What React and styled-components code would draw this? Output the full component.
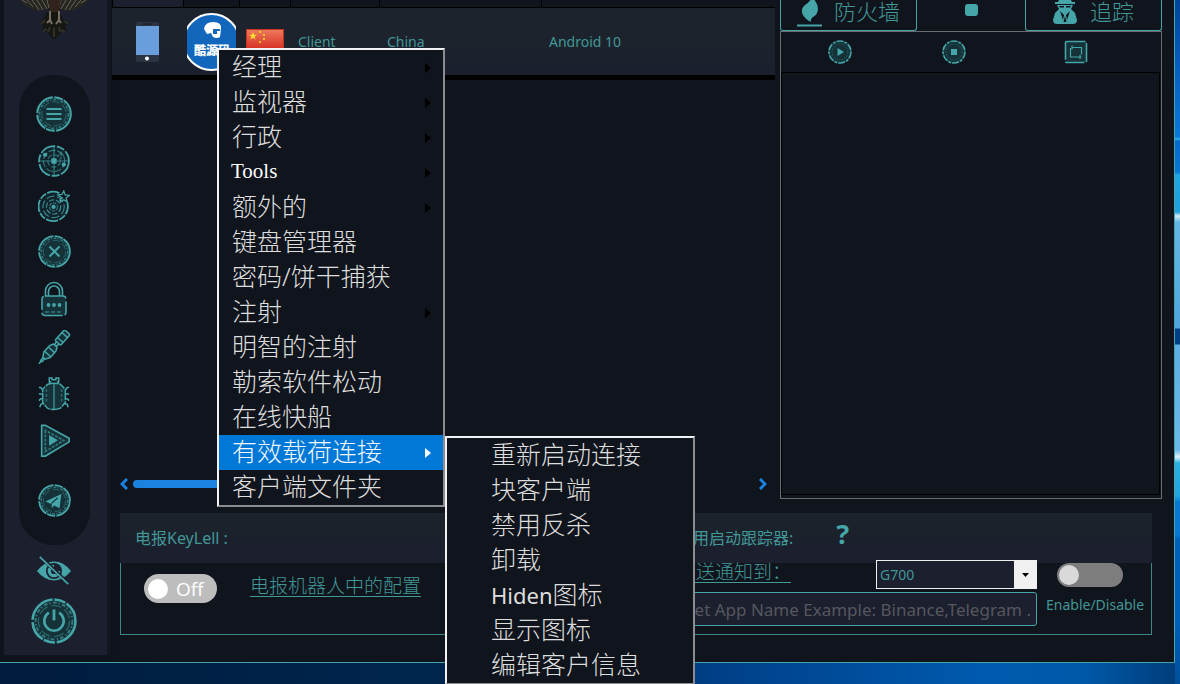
import React from "react";
import styled, { createGlobalStyle, css } from "styled-components";

const teal = "#45a5a8";
const tealText = "#429797";
const sans = `"Noto Sans", "Noto Sans CJK SC", sans-serif`;

const GlobalStyle = createGlobalStyle`
  *, *::before, *::after { box-sizing: border-box; }
  body {
    margin: 0;
    min-height: 100vh;
    font-family: ${sans};
    background:
      linear-gradient(180deg, #00459a 0, #0a62c4 78px, #0a78d8 137px, #2ab4e8 139px, #0868cc 141px, #0878d4 172px,
        #1ea6e0 175px, #1ea0dc 212px, #d8eef8 216px, #62b6e4 222px, #4fa6de 328px, #003f86 329px, #003f86 344px,
        #5caee4 345px, #6cb8e8 450px, #e0f2fa 457px, #28b0e2 463px, #20a8de 496px, #0878d2 502px, #0878d2 535px,
        #0060b8 539px, #0060b8 620px, #004f9c 100%) right top / 5px 100% no-repeat,
      linear-gradient(90deg, #001c3e 0, #00264f 38%, #00418a 62%, #005bb0 84%, #0058a8 92%, #003c78 100%);
  }
  button, input, select { font: inherit; color: inherit; }
`;

const Window = styled.div`
  display: flex;
  align-items: flex-start;
  margin-right: 5px;
  padding: 0 0 7px 4px;
  background: #10141c;
  border-right: 1px solid ${teal};
  border-bottom: 1px solid ${teal};
`;

const Sidebar = styled.aside`
  flex: 0 0 103px;
  display: flex;
  flex-direction: column;
  align-items: center;
  padding: 0 3px 11px 0;
  background: #1b1f2e;
  box-shadow: 2px 0 4px #151924;
`;

const Logo = styled.div`
  height: 75px;
  svg { display: block; }
`;

const NavPill = styled.nav`
  width: 71px;
  height: 470px;
  padding-top: 21px;
  display: flex;
  flex-direction: column;
  align-items: center;
  gap: 13px;
  border-radius: 34px;
  background: #10141d;
`;

const IconButton = styled.button`
  display: block;
  width: ${(p) => p.$size}px;
  height: ${(p) => p.$size}px;
  margin: ${(p) => p.$gap || 0}px 0 0;
  padding: 0;
  border: 0;
  background: none;
  color: ${teal};
  svg { display: block; width: 100%; height: 100%; }
`;

const Main = styled.main`
  flex: 1;
  min-width: 0;
  margin-left: 5px;
`;

const Upper = styled.div`
  display: flex;
  gap: 5px;
  margin-right: 12px;
`;

const Clients = styled.section`
  position: relative;
  flex: 1;
  min-width: 0;
  display: flex;
  flex-direction: column;
`;

const ClientTable = styled.table`
  width: 100%;
  table-layout: fixed;
  border-collapse: separate;
  border-spacing: 0;
  font-size: 14px;
  line-height: 20px;
  color: ${tealText};
  border-bottom: 5px solid #000;
`;

const HeadCell = styled.th`
  width: ${(p) => (p.$w ? p.$w + "px" : "auto")};
  height: 8px;
  padding: 0;
  border-left: 1px solid #000;
  border-bottom: 1px solid #000;
  background: ${(p) => (p.$sorted ? "#1b1f2e" : "#10141c")};
`;

const ClientRow = styled.tr`
  background: linear-gradient(180deg, #1c232d 60%, #1b1f2e);
`;

const Cell = styled.td`
  height: 67px;
  padding: 0 0 0 ${(p) => p.$pad}px;
  vertical-align: middle;
  svg { display: block; }
`;

const HScroll = styled.div`
  display: flex;
  align-items: center;
  gap: 5px;
  margin: auto 8px 9px;
  height: 12px;
  svg { display: block; }
`;

const Track = styled.div`
  flex: 1;
`;

const Thumb = styled.div`
  width: 86%;
  height: 8px;
  border-radius: 4px;
  background: #1c82e0;
`;

const menuBox = css`
  position: absolute;
  margin: 0;
  padding: 0;
  list-style: none;
  background: #10141c;
  border: 2px solid;
  border-color: #f2f2f4 #8c8c90 #8c8c90 #f2f2f4;
`;

const Menu = styled.ul`
  ${menuBox}
  z-index: 2;
  left: 105px;
  top: 48px;
  width: 228px;
`;

const SubMenu = styled.ul`
  ${menuBox}
  left: 100%;
  top: 1px;
  width: 250px;
  margin-left: 2px;
  border-bottom-width: 1px;
`;

const MenuItem = styled.li`
  position: relative;
`;

const MenuButton = styled.button`
  display: flex;
  align-items: center;
  justify-content: space-between;
  width: 100%;
  height: 35px;
  padding: 0 12px 0 ${(p) => (p.$sub ? 44 : p.$latin ? 12 : 13)}px;
  border: 0;
  background: ${(p) => (p.$active ? "#0078d7" : "none")};
  color: ${(p) => (p.$active ? "#f2f6fb" : p.$latin ? "#fff" : "#dedede")};
  font-family: ${(p) => (p.$latin ? `"Liberation Serif", serif` : `"Noto Sans", "Noto Sans CJK SC", sans-serif`)};
  font-size: ${(p) => (p.$latin ? 21 : 25)}px;
  font-weight: ${(p) => (p.$latin ? 400 : 300)};
  line-height: 33px;
  text-align: left;
  white-space: nowrap;
  span { padding-bottom: 2px; }
  svg { display: block; fill: ${(p) => (p.$active ? "#fff" : "#000")}; }
`;

const Latin = styled.b`
  font-size: 22px;
  font-weight: 400;
`;

const Tracker = styled.section`
  flex: 0 0 382px;
`;

const TabRow = styled.div`
  display: flex;
  justify-content: space-between;
  align-items: flex-start;
`;

const TabButton = styled.button`
  display: flex;
  align-items: center;
  justify-content: space-between;
  width: 137px;
  height: 31px;
  padding: 0 ${(p) => p.$end}px 8px ${(p) => p.$start}px;
  border: 1px solid ${teal};
  border-top: 0;
  border-radius: 0 0 3px 3px;
  background: none;
  color: ${tealText};
  font-size: 22px;
  font-weight: 300;
  line-height: 22px;
  svg { display: block; margin-bottom: -8px; }
`;

const StatusDot = styled.span`
  width: 13px;
  height: 12px;
  margin-top: 4px;
  border-radius: 3px;
  background: ${teal};
`;

const TrackerBox = styled.div`
  border: 1px solid #6b6b6e;
`;

const TrackerTools = styled.div`
  display: flex;
  height: 40px;
  padding: 8px 73px 0 47px;
  gap: 90px;
  > :last-child { margin-left: auto; }
`;

const TrackerView = styled.div`
  min-height: 423px;
  margin: 0 1px 3px 0;
  border: 1px solid #000;
`;

const Settings = styled.section`
  display: grid;
  grid-template-columns: 1fr 532px;
  margin: 14px 22px 0 8px;
  color: ${tealText};
`;

const SettingsHead = styled.header`
  display: flex;
  align-items: center;
  height: 50px;
  padding-left: ${(p) => p.$pad}px;
  background: linear-gradient(180deg, #1b222b 0, #1b222b 20px, #1b1f2e 34px);
  font-size: 16px;
  line-height: 24px;
`;

const HeadLabel = styled.span`
  white-space: nowrap;
`;

const HelpButton = styled.button`
  margin-left: 43px;
  padding: 0 0 8px;
  border: 0;
  background: none;
  color: ${teal};
  font-family: "Noto Sans", sans-serif;
  font-size: 27px;
  font-weight: 700;
  line-height: 40px;
`;

const KeyLellBody = styled.div`
  display: flex;
  align-items: flex-start;
  gap: 33px;
  height: 72px;
  padding: 11px 0 0 23px;
  border: solid #3a8587;
  border-width: 0 0 1px 1px;
`;

const TextLink = styled.a`
  color: ${tealText};
  font-size: 19px;
  font-weight: 300;
  line-height: 24px;
  white-space: nowrap;
  text-decoration: underline;
  text-underline-offset: 3px;
`;

const Switch = styled.label`
  position: relative;
  display: flex;
  align-items: center;
  width: ${(p) => p.$w}px;
  height: ${(p) => p.$h}px;
  padding-left: 32px;
  border-radius: 15px;
  background: ${(p) => p.$bg};
  color: #fff;
  font-family: "Open Sans", "Noto Sans", sans-serif;
  font-size: 19px;
  line-height: 28px;
`;

const SwitchInput = styled.input`
  appearance: none;
  position: absolute;
  left: ${(p) => p.$inset}px;
  width: 20px;
  height: 20px;
  margin: 0;
  border-radius: 50%;
  background: ${(p) => p.$knob};
`;

const AppBody = styled.div`
  display: flex;
  gap: 9px;
  height: 72px;
  border: solid #3a8587;
  border-width: 0 1px 1px 0;
`;

const AppFields = styled.div`
  flex: 1;
  display: flex;
  flex-direction: column;
  gap: 3px;
  margin-top: -3px;
`;

const NotifyRow = styled.div`
  display: flex;
  justify-content: space-between;
  height: 29px;
  padding-left: 57px;
`;

const SelectBox = styled.div`
  position: relative;
  width: 161px;
  border: 1px solid #f0f0f0;
  background: #1b1f2e;
  svg { position: absolute; right: 0; top: 0; pointer-events: none; }
`;

const Select = styled.select`
  appearance: none;
  display: block;
  width: 100%;
  height: 26px;
  padding: 0 24px 0 3px;
  border: 0;
  background: none;
  color: ${tealText};
  font-size: 14px;
`;

const AppInput = styled.input`
  width: 100%;
  height: 34px;
  padding: 0 5px;
  border: 1px solid ${teal};
  border-radius: 3px;
  background: #1b1f2e;
  font-size: 17px;
  text-align: right;
  &::placeholder { color: #56575e; opacity: 1; }
`;

const EnableGroup = styled.div`
  display: flex;
  flex-direction: column;
  width: 105px;
  gap: 6px;
  font-size: 14px;
  line-height: 24px;
  white-space: nowrap;
`;

const SwitchSlot = styled.div`
  padding-left: 11px;
`;

/* Concentric dashed rings shared by the round sidebar icons. */
const Dial = ({ children }) => (
  <svg viewBox="0 0 36 36" fill="none" stroke="currentColor" aria-hidden="true">
    <circle cx="18" cy="18" r="16.8" fill="#153238" strokeWidth="2" strokeDasharray="24 1.5 9 1 16 2" />
    <circle cx="18" cy="18" r="14.4" strokeWidth="1.6" strokeDasharray="3 1.4 1 2" opacity=".6" />
    <circle cx="18" cy="18" r="12.2" strokeWidth="1" strokeDasharray="8 3" opacity=".45" />
    {children}
  </svg>
);

const MenuGlyph = () => <Dial><path d="M10.5 13h15M10.5 18h15M10.5 23h15" strokeWidth="2" /></Dial>;
const RadarGlyph = () => (
  <svg viewBox="0 0 36 36" fill="none" stroke="currentColor" strokeWidth="1.3">
    <circle cx="18" cy="18" r="16.8" fill="#11242c" strokeWidth="2" strokeDasharray="18 2 9 2" />
    <circle cx="18" cy="18" r="12" opacity=".65" strokeDasharray="8 2" />
    <circle cx="18" cy="18" r="7" opacity=".6" strokeDasharray="6 2" />
    <path d="M18 1v34M1 18h34" opacity=".7" />
    <path d="M22 13l4-5 3 5M26 8v8" opacity=".5" />
    <rect x="15" y="15" width="6" height="6" rx="1" fill="currentColor" stroke="none" />
    <circle cx="8" cy="11" r="2.4" fill="currentColor" stroke="none" />
    <circle cx="29" cy="22" r="2.4" fill="currentColor" stroke="none" />
  </svg>
);
const TargetGlyph = () => (
  <svg viewBox="0 0 36 36" fill="none" stroke="currentColor" strokeWidth="1.4">
    <path d="M24 3.500A16.500 16.500 0 1 0 33 14" fill="#11242c" strokeWidth="2" strokeDasharray="14 1.500 8 1.500" />
    <circle cx="17.500" cy="19" r="12" strokeDasharray="9 3" opacity=".75" />
    <circle cx="17.500" cy="19" r="8" strokeDasharray="6 2" opacity=".8" />
    <circle cx="17.500" cy="19" r="4.500" opacity=".6" strokeDasharray="4 1" />
    <circle cx="17.500" cy="19" r="2.400" fill="currentColor" stroke="none" />
    <path d="M24 12l4-4M29 1l1.500 4.500 5 .5-4 3 1.500 4.500-4-2.500-4 2.500 1-5-3.500-3 4.500-.5z" />
  </svg>
);
const CloseGlyph = () => <Dial><path d="M12.500 12.500l11 11M23.500 12.500l-11 11" strokeWidth="2.200" /></Dial>;
const LockGlyph = () => (
  <svg viewBox="0 0 36 36" fill="none" stroke="currentColor" strokeWidth="1.6">
    <path d="M9.500 15V10a8.500 8.500 0 0 1 17 0V15M12.500 15V10.500a5.500 5.500 0 0 1 11 0V15" />
    <rect x="6" y="15" width="24" height="19.500" rx="3" fill="#153238" strokeDasharray="22 3 14 2" />
    <path d="M9 31h18" strokeDasharray="4 2" opacity=".6" />
    <g fill="currentColor" stroke="none"><circle cx="12.500" cy="24" r="1.900" /><circle cx="18" cy="24" r="1.900" /><circle cx="23.500" cy="24" r="1.900" /></g>
  </svg>
);
const InjectorGlyph = () => (
  <svg viewBox="0 0 36 36" fill="none" stroke="currentColor" strokeWidth="1.600">
    <g transform="rotate(-48 18 18)">
      <rect x="24" y="14" width="15" height="8" rx="1.500" fill="#153238" />
      <path d="M28 14v8M35 14v8M24 16l-4 1v2l4 1" />
      <path d="M20 15.500l-4-2H7l-5 3v3l5 3h9l4-2z" fill="#153238" />
      <path d="M8 14v8M14 14v8M2 17h-4v2h4M-2 18h-4" />
    </g>
  </svg>
);
const BugGlyph = () => (
  <svg viewBox="0 0 36 36" fill="none" stroke="currentColor" strokeWidth="1.600">
    <path d="M13 7l1-2h-1V1h3v2h4V1h3v4h-1l1 2" />
    <path d="M11 8q7-3 14 0l5 5v14l-5 6q-7 3-14 0l-5-6V13z" fill="#153238" strokeDasharray="12 1 7 1" />
    <path d="M18 7v27" strokeWidth="1.2" />
    <path d="M10 13v14M26 13v14" opacity=".5" strokeDasharray="3 2" />
    <path d="M6 14l-2-3H2M6 18H2M6 23H4l-2 2M7 28l-3 1-1 3M30 14l2-3h2M30 18h4M30 23h2l2 2M29 28l3 1 1 3" />
  </svg>
);
const PlayGlyph = () => (
  <svg viewBox="0 0 36 36" fill="none" stroke="currentColor" strokeWidth="1.800">
    <path d="M4 1.500h4l26 14v4L8 35H4z" fill="#153238" />
    <path d="M8 7v23L28 18z" strokeDasharray="3 1.500" opacity=".65" />
    <path d="M13 13.500v8.500l7-4.300z" fill="currentColor" />
  </svg>
);
const TelegramGlyph = () => (
  <Dial>
    <path d="M8 19L25.500 11l-2 15.500-6-3-2.500 3v-4.500z" fill="currentColor" stroke="none" />
    <path d="M14.500 21.500l7-6.500" stroke="#153238" strokeWidth="1.200" />
  </Dial>
);
const HiddenEyeGlyph = () => (
  <svg viewBox="0 0 36 36" fill="none" stroke="currentColor">
    <path d="M0 18q8-10 18-10t18 10q-8 10-18 10T0 18z" fill="currentColor" stroke="none" />
    <circle cx="18" cy="18" r="8.500" fill="#1b1f2e" stroke="none" />
    <path d="M23 18a5 5 0 1 1-5-5" strokeWidth="3.400" />
    <path d="M5 4l29 28" stroke="#1b1f2e" strokeWidth="3.500" />
    <path d="M3 3l30 29" strokeWidth="1.800" />
  </svg>
);
const PowerGlyph = () => (
  <Dial>
    <path d="M18 9v8.500" strokeWidth="2.200" />
    <path d="M14 11.500a7.600 7.600 0 1 0 8 0" strokeWidth="2" />
  </Dial>
);

const Eagle = () => (
  <svg width="80" height="42" viewBox="0 0 80 42" fill="none">
    <path d="M5 0q15 16 31 8V0zM75 0q-15 16-31 8V0z" fill="#26251f" />
    <g stroke="#65635a" strokeWidth="1">
      <path d="M8 0l5 3M13 0l6 7M18 0l7 10M23 0l6 10M28 0l5 9M33 0l2 8" />
      <path d="M72 0l-5 3M67 0l-6 7M62 0l-7 10M57 0l-6 10M52 0l-5 9M47 0l-2 8" />
    </g>
    <path d="M34 0h13l-2 11q-5 6-9 0z" fill="#32231d" />
    <path d="M33 12l-4 7-3 4 4 3-2 4 6 3 3 4 3 3 4-4 4-4 5-1-2-4 3-4-5-4-4-7z" fill="#161713" />
    <path d="M31 20l-4 4M50 21l4 3M33 29l-4 2M47 30l4 2M40 28v9M36 27l-2 5M45 27l1 5" stroke="#303028" strokeWidth="2" />
    <path d="M36 11v9l-3 3M36 20l2 4M45 11v9l-3 4M45 20l2 3" stroke="#777264" strokeWidth="2" />
  </svg>
);

const Phone = () => (
  <svg width="24" height="40" viewBox="0 0 24 40">
    <rect x="1" width="23" height="40" rx="2" fill="#2b3442" />
    <rect x="1" y="4" width="23" height="29" fill="#699ddb" />
    <path d="M7 2h10" stroke="#161b24" />
    <circle cx="12" cy="36.500" r="2" fill="#fff" />
  </svg>
);

const AvatarText = styled.text`
  font: 900 12px "Noto Sans CJK SC", sans-serif;
`;

const Avatar = () => (
  <svg width="50" height="58" viewBox="0 0 50 58">
    <defs><clipPath id="face"><rect width="49" height="58" /></clipPath></defs>
    <g clipPath="url(#face)">
      <circle cx="24.500" cy="29" r="28" fill="#1267bd" stroke="#fff" strokeWidth="2" />
    </g>
    <path d="M17 16q1-7 9-7 9 0 8 7l-1 8q-3 2-7 0l-2-4-4 1z" fill="#fff" />
    <path d="M26 16h7v2h-3v3h-4z" fill="#1267bd" />
    <AvatarText x="7" y="42" fill="#fff">酷源码</AvatarText>
  </svg>
);

const star = "M0-4L1.100-1.300 4-1.200 1.700.6 2.500 3.400 0 1.800-2.500 3.400-1.700.6-4-1.200-1.100-1.300z";
const Flag = () => (
  <svg width="38" height="25" viewBox="0 0 38 25">
    <defs><linearGradient id="red" x1="0" y1="0" x2="0" y2="1"><stop offset="0" stopColor="#ee7a5c" /><stop offset="1" stopColor="#d01f14" /></linearGradient></defs>
    <rect x=".5" y=".5" width="37" height="24" fill="url(#red)" stroke="#c23420" />
    <g fill="#fadd30">
      <path d={star} transform="translate(7 7)" />
      {[[14, 3], [18, 6], [18, 10], [14, 13]].map(([x, y]) => <circle key={y} cx={x} cy={y} r="1.100" />)}
    </g>
  </svg>
);

const Chevron = ({ flip }) => (
  <svg width="8" height="12" viewBox="0 0 8 12" fill="none" stroke="#1c82e0" strokeWidth="3">
    <path d={flip ? "M1 1l5 5-5 5" : "M7 1L2 6l5 5"} />
  </svg>
);

const Flame = () => (
  <svg width="26" height="30" viewBox="0 0 26 30" fill={teal}>
    <path d="M15-3q6 6 6 12 0 5-5 8-3 2-2 5-5-2-8-7-3-6 2-10 5-3 7-8z" />
    <rect y="24.500" width="25" height="2" />
  </svg>
);

const Spy = () => (
  <svg width="24" height="30" viewBox="0 0 24 30" fill={teal}>
    <path d="M6 0h12l1 2h3v2H2V2h3z" />
    <path d="M4 5h16l-2 4 4 4 2 7q0 4-4 4H4q-4 0-4-4l2-7 4-4z" />
    <path d="M6 6h5v1.500H7zM13 6h5l-1 1.500h-4zM7 11l4 4-1 5zM17 11l-4 4 1 5zM12 16l1.500 6h-3z" fill="#10141c" />
  </svg>
);

const SmallRing = ({ children }) => (
  <svg viewBox="0 0 24 24" fill="none" stroke="currentColor">
    <circle cx="12" cy="12" r="11" fill="#153238" strokeWidth="1.600" strokeDasharray="7 1 3 1" />
    <circle cx="12" cy="12" r="8" opacity=".3" strokeDasharray="2 1" />
    {children}
  </svg>
);
const StartGlyph = () => <SmallRing><path d="M9.500 8v8l6.500-4z" fill="currentColor" stroke="none" /></SmallRing>;
const StopGlyph = () => <SmallRing><rect x="9" y="9" width="6" height="6" fill="currentColor" stroke="none" /></SmallRing>;
const RepeatGlyph = () => (
  <svg viewBox="0 0 24 24" fill="none" stroke="currentColor">
    <rect x="1.500" y="1.500" width="21" height="21" rx="1" fill="#153238" strokeWidth="1.600" strokeDasharray="19 2" />
    <path d="M8 5.500v4M8 7.500h9.500v7M6.500 8v9h8M16 15v4M13.500 17h4" strokeWidth="1.200" />
  </svg>
);

const nav = [
  ["菜单", 36, MenuGlyph], ["雷达", 32, RadarGlyph], ["目标", 32, TargetGlyph], ["关闭", 33, CloseGlyph],
  ["锁定", 36, LockGlyph], ["注入", 34, InjectorGlyph], ["调试", 34, BugGlyph], ["播放", 33, PlayGlyph],
  ["电报", 33, TelegramGlyph, 14],
];

const menuItems = [
  { text: "经理", arrow: true }, { text: "监视器", arrow: true }, { text: "行政", arrow: true },
  { text: "Tools", arrow: true, latin: true }, { text: "额外的", arrow: true }, { text: "键盘管理器" },
  { text: "密码/饼干捕获" }, { text: "注射", arrow: true }, { text: "明智的注射" }, { text: "勒索软件松动" },
  { text: "在线快船" },
  {
    text: "有效载荷连接", arrow: true,
    items: ["重新启动连接", "块客户端", "禁用反杀", "卸载", <><Latin>Hiden</Latin>图标</>, "显示图标", "编辑客户信息"],
  },
  { text: "客户端文件夹" },
];

const ContextMenu = () => (
  <Menu>
    {menuItems.map(({ text, arrow, latin, items }) => (
      <MenuItem key={text}>
        <MenuButton $active={!!items} $latin={latin}>
          <span>{text}</span>
          {arrow && <svg width="6" height="10" viewBox="0 0 6 10"><path d="M0 0l6 5-6 5z" /></svg>}
        </MenuButton>
        {items && (
          <SubMenu>
            {items.map((item, i) => (
              <MenuItem key={i}><MenuButton $sub><span>{item}</span></MenuButton></MenuItem>
            ))}
          </SubMenu>
        )}
      </MenuItem>
    ))}
  </Menu>
);

export default function App() {
  return (
    <>
      <GlobalStyle />
      <Window>
        <Sidebar>
          <Logo><Eagle /></Logo>
          <NavPill>
            {nav.map(([label, size, Glyph, gap]) => (
              <IconButton key={label} aria-label={label} $size={size} $gap={gap}><Glyph /></IconButton>
            ))}
          </NavPill>
          <IconButton aria-label="隐藏" $size={34} $gap={9}><HiddenEyeGlyph /></IconButton>
          <IconButton aria-label="电源" $size={46} $gap={10}><PowerGlyph /></IconButton>
        </Sidebar>
        <Main>
          <Upper>
            <Clients>
              <ClientTable>
                <thead>
                  <tr>
                    <HeadCell $w={71} $sorted /><HeadCell $w={56} /><HeadCell $w={51} />
                    <HeadCell $w={89} /><HeadCell $w={162} /><HeadCell />
                  </tr>
                </thead>
                <tbody>
                  <ClientRow>
                    <Cell $pad={23}><Phone /></Cell>
                    <Cell $pad={4}><Avatar /></Cell>
                    <Cell $pad={7}><Flag /></Cell>
                    <Cell $pad={8}>Client</Cell>
                    <Cell $pad={8}>China</Cell>
                    <Cell $pad={8}>Android 10</Cell>
                  </ClientRow>
                </tbody>
              </ClientTable>
              <HScroll>
                <Chevron />
                <Track><Thumb /></Track>
                <Chevron flip />
              </HScroll>
              <ContextMenu />
            </Clients>
            <Tracker>
              <TabRow>
                <TabButton $start={16} $end={16}><Flame />防火墙</TabButton>
                <StatusDot />
                <TabButton $start={27} $end={27}><Spy />追踪</TabButton>
              </TabRow>
              <TrackerBox>
                <TrackerTools>
                  <IconButton aria-label="开始" $size={24}><StartGlyph /></IconButton>
                  <IconButton aria-label="停止" $size={24}><StopGlyph /></IconButton>
                  <IconButton aria-label="重复" $size={24}><RepeatGlyph /></IconButton>
                </TrackerTools>
                <TrackerView />
              </TrackerBox>
            </Tracker>
          </Upper>
          <Settings>
            <SettingsHead $pad={15}><HeadLabel>电报KeyLell :</HeadLabel></SettingsHead>
            <SettingsHead $pad={57}>
              <HeadLabel>启用启动跟踪器:</HeadLabel>
              <HelpButton aria-label="帮助">?</HelpButton>
            </SettingsHead>
            <KeyLellBody>
              <Switch $w={73} $h={29} $bg="#bdbdbd">
                <SwitchInput type="checkbox" $inset={4} $knob="#fff" />
                Off
              </Switch>
              <TextLink href="#telegram">电报机器人中的配置</TextLink>
            </KeyLellBody>
            <AppBody>
              <AppFields>
                <NotifyRow>
                  <TextLink href="#notify">发送通知到：</TextLink>
                  <SelectBox>
                    <Select aria-label="G700" defaultValue="G700"><option>G700</option></Select>
                    <svg width="22" height="27" viewBox="0 0 22 27"><rect width="22" height="27" fill="#f0f0f0" /><path d="M8 12h7l-3.500 4z" /></svg>
                  </SelectBox>
                </NotifyRow>
                <AppInput aria-label="App Name" placeholder="Target App Name Example: Binance,Telegram ." />
              </AppFields>
              <EnableGroup>
                <SwitchSlot>
                  <Switch $w={66} $h={24} $bg="#7d7d7d">
                    <SwitchInput id="enable" type="checkbox" $inset={2} $knob="#d9d9d9" />
                  </Switch>
                </SwitchSlot>
                <label htmlFor="enable">Enable/Disable</label>
              </EnableGroup>
            </AppBody>
          </Settings>
        </Main>
      </Window>
    </>
  );
}
